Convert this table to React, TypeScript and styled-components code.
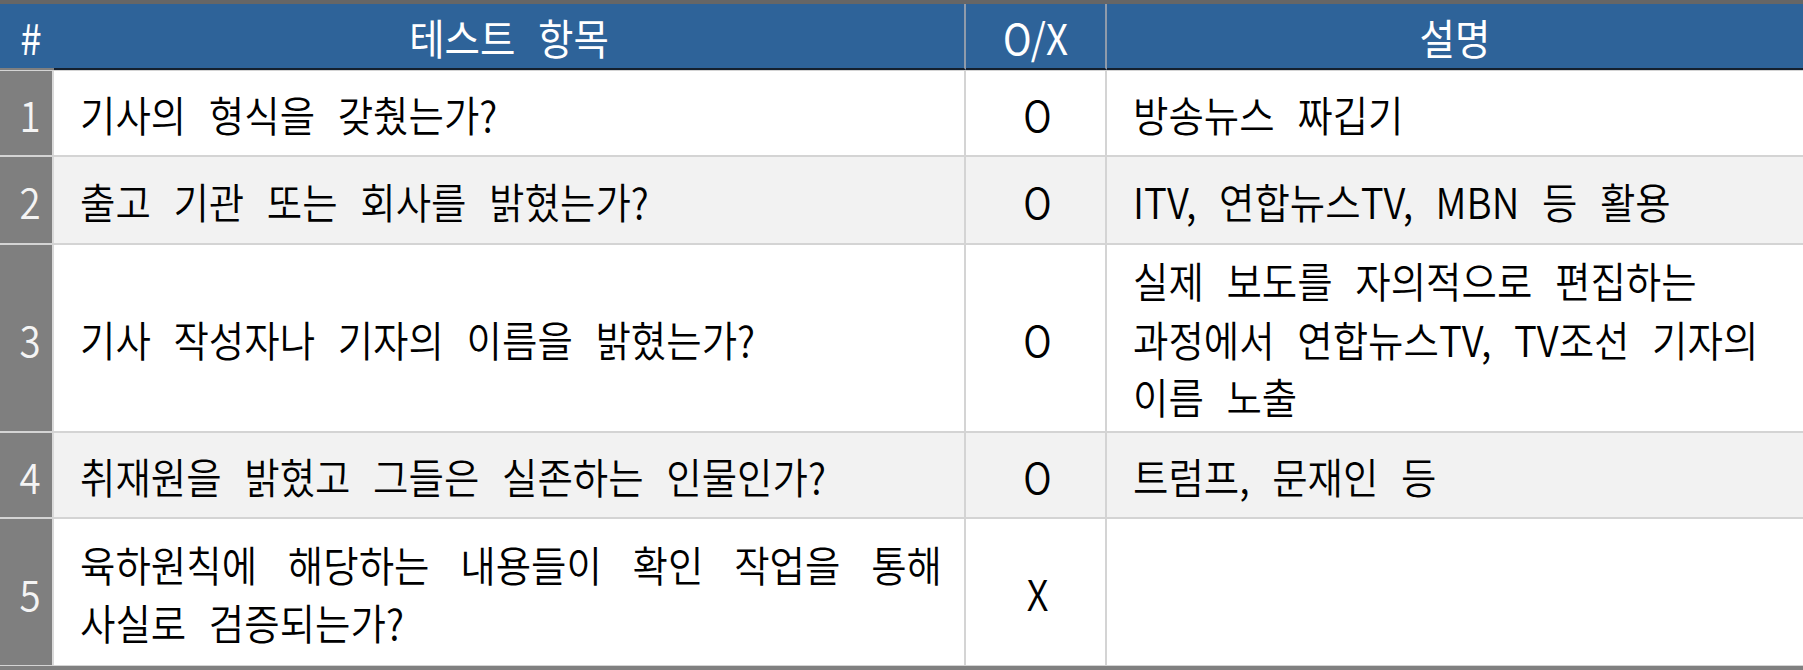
import React from 'react';
import styled, { createGlobalStyle } from 'styled-components';

const Global = createGlobalStyle`
  html, body { margin: 0; padding: 0; background: #ffffff; }
  body { font-family: "Noto Sans CJK KR", "Noto Sans", sans-serif; }
  * { box-sizing: border-box; }
`;

const COLS = '54px 912px 141px 1fr';
const BLUE = '#2e6399';
const LINE = '#d4d4d4';

const Table = styled.div`
  width: 1803px;
  border-top: 4px solid #666666;
  border-bottom: 4px solid #808080;
`;

const HeaderRow = styled.div`
  display: grid;
  grid-template-columns: ${COLS};
  height: 66px;
`;

const HeaderCell = styled.div<{ $divider?: boolean; $under: string }>`
  background: ${BLUE};
  color: #ffffff;
  display: flex;
  align-items: center;
  justify-content: center;
  padding-left: ${(p) => (p.$under === 'gray' ? '8px' : '0')};
  border-bottom: 2px solid ${(p) => (p.$under === 'gray' ? '#7f7f7f' : '#14202e')};
  border-right: ${(p) => (p.$divider ? '2px solid #8f9bab' : 'none')};
`;

const Row = styled.div<{ $h: number; $bg: string; $top: number; $bottom?: boolean }>`
  display: grid;
  grid-template-columns: ${COLS};
  height: ${(p) => p.$h + p.$top + (p.$bottom ? 1 : 0)}px;
  border-top: ${(p) => p.$top}px solid ${LINE};
  border-bottom: ${(p) => (p.$bottom ? `1px solid ${LINE}` : 'none')};
  background: ${(p) => p.$bg};
`;

const NumCell = styled.div`
  background: #7f7f7f;
  color: #f4f4f4;
  border-right: 2px solid #d9d9d9;
  padding-left: 8px;
  display: flex;
  align-items: center;
  justify-content: center;
`;

const Cell = styled.div<{ $align: 'left' | 'center'; $divider?: boolean }>`
  display: flex;
  align-items: center;
  justify-content: ${(p) => (p.$align === 'center' ? 'center' : 'flex-start')};
  padding: 0 22px 0 26px;
  border-right: ${(p) => (p.$divider ? `2px solid ${LINE}` : 'none')};
  color: #000000;
`;

const Text = styled.span<{ $full?: boolean; $head?: boolean }>`
  display: block;
  width: ${(p) => (p.$full ? '100%' : 'auto')};
  font-size: 38.5px;
  font-weight: ${(p) => (p.$head ? 400 : 350)};
  line-height: 52.5px;
  word-spacing: 14px;
  text-align: left;
  transform: scaleY(1.1);
  transform-origin: center;
  white-space: nowrap;
`;

const Line = styled.span<{ $justify?: boolean }>`
  display: block;
  text-align: ${(p) => (p.$justify ? 'justify' : 'left')};
  text-align-last: ${(p) => (p.$justify ? 'justify' : 'left')};
`;

type RowData = {
  n: number;
  item: string[];
  ox: string;
  desc: string[];
  h: number;
  bg: string;
  top: number;
  bottom?: boolean;
};

const rows: RowData[] = [
  { n: 1, item: ['기사의 형식을 갖췄는가?'], ox: 'O', desc: ['방송뉴스 짜깁기'], h: 84, bg: '#ffffff', top: 1 },
  { n: 2, item: ['출고 기관 또는 회사를 밝혔는가?'], ox: 'O', desc: ['ITV, 연합뉴스TV, MBN 등 활용'], h: 86, bg: '#f2f2f2', top: 2 },
  {
    n: 3,
    item: ['기사 작성자나 기자의 이름을 밝혔는가?'],
    ox: 'O',
    desc: ['실제 보도를 자의적으로 편집하는', '과정에서 연합뉴스TV, TV조선 기자의', '이름 노출'],
    h: 186,
    bg: '#ffffff',
    top: 2,
  },
  { n: 4, item: ['취재원을 밝혔고 그들은 실존하는 인물인가?'], ox: 'O', desc: ['트럼프, 문재인 등'], h: 84, bg: '#f2f2f2', top: 2 },
  {
    n: 5,
    item: ['육하원칙에 해당하는 내용들이 확인 작업을 통해', '사실로 검증되는가?'],
    ox: 'X',
    desc: [],
    h: 146,
    bg: '#ffffff',
    top: 2,
    bottom: true,
  },
];

export default function App() {
  return (
    <>
      <Global />
      <Table>
        <HeaderRow>
          <HeaderCell $under="gray">
            <Text $head>#</Text>
          </HeaderCell>
          <HeaderCell $under="dark" $divider>
            <Text $head>테스트 항목</Text>
          </HeaderCell>
          <HeaderCell $under="dark" $divider>
            <Text $head>O/X</Text>
          </HeaderCell>
          <HeaderCell $under="dark">
            <Text $head>설명</Text>
          </HeaderCell>
        </HeaderRow>
        {rows.map((r) => (
          <Row key={r.n} $h={r.h} $bg={r.bg} $top={r.top} $bottom={r.bottom}>
            <NumCell>
              <Text>{r.n}</Text>
            </NumCell>
            <Cell $align="left" $divider>
              <Text $full>
                {r.item.map((l, i) => (
                  <Line key={i} $justify={r.item.length > 1 && i < r.item.length - 1}>
                    {l}
                  </Line>
                ))}
              </Text>
            </Cell>
            <Cell $align="center" $divider>
              <Text>{r.ox}</Text>
            </Cell>
            <Cell $align="left">
              <Text>
                {r.desc.map((l, i) => (
                  <Line key={i}>{l}</Line>
                ))}
              </Text>
            </Cell>
          </Row>
        ))}
      </Table>
    </>
  );
}
